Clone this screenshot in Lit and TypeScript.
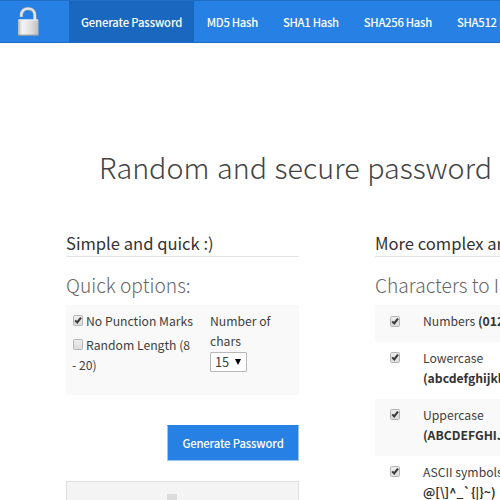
import { LitElement, html, css, svg } from "lit";
import { customElement, property } from "lit/decorators.js";

@customElement("check-box")
class CheckBox extends LitElement {
  @property({ type: Boolean }) checked = false;
  static styles = css`
    :host { display: inline-block; width: 10px; height: 11px; }
    .box { display: block; }
  `;
  render() {
    return html`<svg class="box" width="10" height="11" viewBox="0 0 10 11">
      <defs><linearGradient id="g" x2="0" y2="1"><stop stop-color="#eeeeee" /><stop offset="1" stop-color="#dcdcdc" /></linearGradient></defs>
      <rect x=".5" y=".5" width="9" height="10" rx="1.2" fill="url(#g)" stroke="#b5b5b5" />
      ${this.checked ? svg`<path d="M2.2 5.4 L4.2 7.5 L8 2.6" fill="none" stroke="#3c3c3c" stroke-width="2.1" />` : ""}
    </svg>`;
  }
}

@customElement("app-root")
class AppRoot extends LitElement {
  static styles = css`
    :host {
      display: block; width: 500px; height: 500px; overflow: hidden; background: #fff; color: #404040;
      font: 400 12.2px/20px "Noto Sans CJK SC", "Source Sans Pro", sans-serif;
    }
    * { box-sizing: border-box; }
    nav { display: flex; height: 43px; width: 700px; background: #2780e3; border: solid #1f6dc5; border-width: 1px 0; }
    .logo { width: 69px; padding: 6px 0 0 17px; flex: none; }
    .logo svg { display: block; }
    .tab { color: #fff; font-size: 11.3px; letter-spacing: -0.3px; font-weight: 500; line-height: 41px; padding: 1px 12.5px 0; height: 41px; white-space: nowrap; flex: none; }
    .tab.active { background: #1967be; letter-spacing: -0.14px; padding: 1px 12px 0; }
    h1, h2, h3 { margin: 0; font-weight: 400; white-space: nowrap; }
    h1 { font-size: 28.7px; word-spacing: 1.2px; font-weight: 300; line-height: 40px; padding-left: 99px; margin-top: 104px; color: #444; }
    .columns { display: grid; grid-template-columns: 233px 300px; column-gap: 76px; padding-left: 66px; margin-top: 44px; width: 700px; }
    h2 { font-size: 16.6px; line-height: 24px; height: 26px; border-bottom: 1px solid #e3e3e3; color: #333; }
    h3 { font-size: 19.2px; font-weight: 300; line-height: 30px; margin-top: 13px; height: 35px; color: #666; }
    .panel { display: flex; background: #f9f9f9; height: 90px; padding: 6px; }
    .opts { width: 138px; white-space: nowrap; }
    .opts div { margin-bottom: 4px; }
    .opts check-box { margin: 0 3px 0 1px; }
    .select { display: flex; align-items: center; justify-content: space-between; width: 37px; height: 20px; border: 1px solid #b8b8b8; border-radius: 1px; background: #fff; padding: 0 5px 0 4px; margin-top: 1px; font-size: 12.8px; }
    .button { width: 132px; height: 36px; margin: 30px 0 0 auto; background: #2780e3; border: 1px solid #9cc4f1; border-top-color: #2780e3; color: #fff; font-size: 11.3px; letter-spacing: -0.14px; font-weight: 500; line-height: 34px; text-align: center; white-space: nowrap; }
    .meter { height: 60px; margin-top: 20px; background: #f4f4f4; border: 1px solid #dfdfdf; display: flex; padding: 12px 0 0 100px; }
    .mark { width: 10px; height: 20px; background: #dcdcdc; }
    .row { display: flex; padding: 5.4px 0 0 15px; height: 57px; white-space: nowrap; }
    .row.single { height: 37.2px; padding-top: 6px; }
    .row.odd { background: #f9f9f9; }
    .row check-box { width: 33px; margin-top: 4.5px; }
    b { font-weight: 700; color: #333; }
  `;
  render() {
    const rows = [
      ["Numbers", "(0123456789)"],
      ["Lowercase", "(abcdefghijklmnopqrstuvwxyz)"],
      ["Uppercase", "(ABCDEFGHIJKLMNOPQRSTUVWXYZ)"],
      ["ASCII symbols", "@[\\]^_\`{|}~)"],
    ];
    return html`
      <nav>
        <div class="logo">
          <svg width="22" height="30" viewBox="0 0 22 30">
            <defs>
              <linearGradient id="body"><stop stop-color="#b5b5b5" /><stop offset=".2" stop-color="#f5f5f5" /><stop offset=".65" stop-color="#dddddd" /><stop offset="1" stop-color="#bdbdbd" /></linearGradient>
            </defs>
            <path d="M4.3 10 V8 C4.3 -0.5 17.8 -0.5 17.8 8 V13" fill="none" stroke="#8f9fac" stroke-width="3.6" />
            <path d="M4.3 9.7 V8 C4.3 -0.5 17.8 -0.5 17.8 8 V13" fill="none" stroke="#e4e5e5" stroke-width="2.4" />
            <rect x="1" y="12.5" width="20.5" height="16" rx="1" fill="url(#body)" />
            <path d="M1 28.2 H21.5" stroke="#858d94" />
            <path d="M1.5 13 H21" stroke="#f4f4f4" />
          </svg>
        </div>
        <div class="tab active">Generate Password</div>
        <div class="tab">MD5 Hash</div>
        <div class="tab">SHA1 Hash</div>
        <div class="tab">SHA256 Hash</div>
        <div class="tab">SHA512 Hash</div>
      </nav>
      <h1>Random and secure password generator</h1>
      <div class="columns">
        <section>
          <h2>Simple and quick :)</h2>
          <h3>Quick options:</h3>
          <div class="panel">
            <div class="opts">
              <div><check-box checked></check-box>No Punction Marks</div>
              <div><check-box></check-box>Random Length (8<br />- 20)</div>
            </div>
            <div>Number of<br />chars
              <div class="select">15<svg width="6" height="6"><path d="M0 0H6L3 6Z" /></svg></div>
            </div>
          </div>
          <div class="button">Generate Password</div>
          <div class="meter"><div class="mark"></div></div>
        </section>
        <section>
          <h2>More complex and secure</h2>
          <h3>Characters to Include:</h3>
          ${rows.map(([name, chars], i) => html`<div class="row ${i % 2 ? "" : "odd"} ${i ? "" : "single"}">
            <check-box checked></check-box>
            <div>${name}${i ? html`<br />` : " "}<b>${chars}</b></div>
          </div>`)}
        </section>
      </div>
    `;
  }
}
